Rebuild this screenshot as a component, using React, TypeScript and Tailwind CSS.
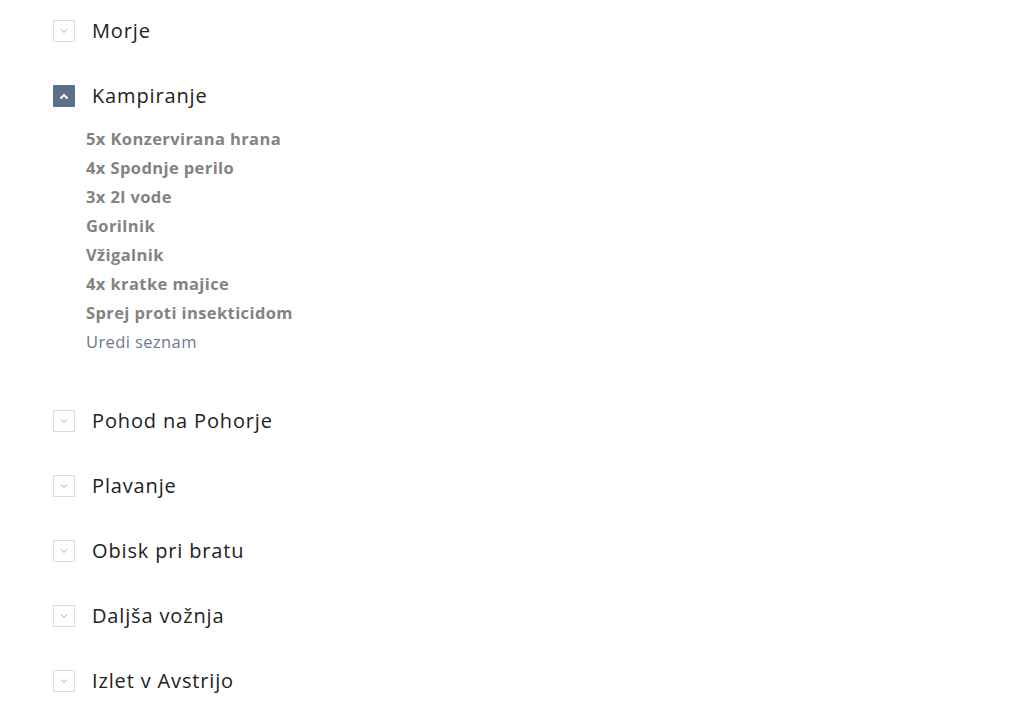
import React from "react";

interface Trip {
  name: string;
  items?: string[];
}

const trips: Trip[] = [
  { name: "Morje" },
  {
    name: "Kampiranje",
    items: [
      "5x Konzervirana hrana",
      "4x Spodnje perilo",
      "3x 2l vode",
      "Gorilnik",
      "Vžigalnik",
      "4x kratke majice",
      "Sprej proti insekticidom",
    ],
  },
  { name: "Pohod na Pohorje" },
  { name: "Plavanje" },
  { name: "Obisk pri bratu" },
  { name: "Daljša vožnja" },
  { name: "Izlet v Avstrijo" },
];

const Toggle: React.FC<{ open: boolean }> = ({ open }) =>
  open ? (
    <span className="flex h-[22px] w-[22px] items-center justify-center bg-[#587089]">
      <svg width="10" height="7" viewBox="0 0 10 7" fill="none">
        <path d="M1.5 5.5 L5 2 L8.5 5.5" stroke="#fff" strokeWidth="2" />
      </svg>
    </span>
  ) : (
    <span className="flex h-[22px] w-[22px] items-center justify-center border border-[#dcdcdc] bg-white">
      <svg width="10" height="6" viewBox="0 0 10 6" fill="none">
        <path d="M2 1.5 L5 4.5 L8 1.5" stroke="#cacaca" strokeWidth="1.2" />
      </svg>
    </span>
  );

export default function App() {
  return (
    <div
      className="min-h-[716px] bg-white pl-[53px] pt-[20px]"
      style={{ fontFamily: '"Open Sans", "Liberation Sans", sans-serif' }}
    >
      <ul>
        {trips.map((trip) => (
          <li key={trip.name} className={trip.items ? "mb-[54px]" : "mb-[43px]"}>
            <div className="flex h-[22px] items-center gap-[17px]">
              <Toggle open={!!trip.items} />
              <span className="text-[20px] tracking-[0.85px] text-[#222]">{trip.name}</span>
            </div>
            {trip.items && (
              <div className="mt-[17px] pl-[33px] text-[16.5px] leading-[29px] tracking-[0.4px]">
                {trip.items.map((item) => (
                  <p key={item} className="font-bold text-[#858282]">
                    {item}
                  </p>
                ))}
                <a className="text-[#6b7a8f]">Uredi seznam</a>
              </div>
            )}
          </li>
        ))}
      </ul>
    </div>
  );
}
